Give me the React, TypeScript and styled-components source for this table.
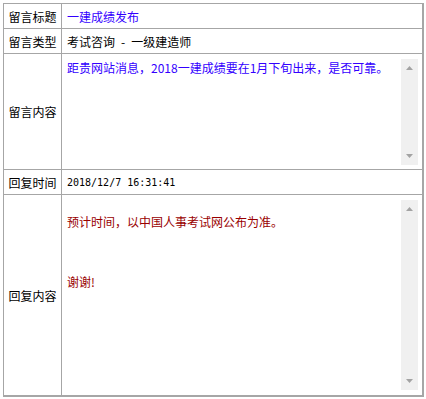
import styled, { createGlobalStyle } from 'styled-components';

const GlobalStyle = createGlobalStyle`
  html, body {
    margin: 0;
    padding: 0;
    background: #fff;
  }
  body {
    font-family: "Noto Sans CJK SC", "Noto Sans", sans-serif;
    font-size: 12px;
    color: #000;
  }
`;

const Page = styled.div`
  padding: 3px;
`;

const Table = styled.div`
  display: grid;
  grid-template-columns: 58px 360px;
  width: 421px;
  box-sizing: border-box;
  border-top: 1px solid #a6a6a6;
  border-left: 1px solid #a6a6a6;
  border-right: 2px solid #a6a6a6;
  border-bottom: 2px solid #a6a6a6;
`;

const Label = styled.div<{ $last?: boolean }>`
  display: flex;
  align-items: center;
  justify-content: center;
  box-sizing: border-box;
  border-right: 1px solid #a6a6a6;
  border-bottom: ${(p) => (p.$last ? 'none' : '1px solid #a6a6a6')};
  line-height: 15px;
  white-space: nowrap;
`;

const Value = styled.div<{ $last?: boolean; $color?: string }>`
  display: flex;
  align-items: center;
  min-height: 25px;
  box-sizing: border-box;
  padding-left: 5px;
  border-bottom: ${(p) => (p.$last ? 'none' : '1px solid #a6a6a6')};
  color: ${(p) => p.$color ?? '#000'};
  line-height: 15px;
  white-space: pre;
`;

const DateText = styled.span`
  font-family: "DejaVu Sans Mono", "Liberation Mono", monospace;
  font-size: 10px;
`;

const AreaCell = styled.div<{ $last?: boolean }>`
  box-sizing: border-box;
  padding: 5px 4px ${(p) => (p.$last ? '5px' : '4px')} 2px;
  border-bottom: ${(p) => (p.$last ? 'none' : '1px solid #a6a6a6')};
`;

const Area = styled.div<{ $height: number }>`
  display: flex;
  height: ${(p) => p.$height}px;
  background: #fff;
`;

const AreaText = styled.div<{ $color: string; $top: number }>`
  flex: 1;
  padding: ${(p) => p.$top}px 0 0 3px;
  color: ${(p) => p.$color};
  line-height: 15px;
  white-space: pre-wrap;
`;

const Scrollbar = styled.div`
  display: flex;
  flex-direction: column;
  justify-content: space-between;
  align-items: center;
  width: 17px;
  padding: 7px 0;
  box-sizing: border-box;
  background: #f0f0f0;
`;

const Arrow = ({ down }: { down?: boolean }) => (
  <svg width="7" height="4" viewBox="0 0 7 4">
    <polygon points={down ? '0,0 7,0 3.5,4' : '3.5,0 7,4 0,4'} fill="#a3a3a3" />
  </svg>
);

const TextBox = ({
  height,
  color,
  top,
  children,
}: {
  height: number;
  color: string;
  top: number;
  children: React.ReactNode;
}) => (
  <Area $height={height}>
    <AreaText $color={color} $top={top}>
      {children}
    </AreaText>
    <Scrollbar>
      <Arrow />
      <Arrow down />
    </Scrollbar>
  </Area>
);

const App = () => {
  return (
    <Page>
      <GlobalStyle />
      <Table>
        <Label>留言标题</Label>
        <Value $color="#3300ff">一建成绩发布</Value>

        <Label>留言类型</Label>
        <Value>{'考试咨询\u2002-\u2002一级建造师'}</Value>

        <Label>留言内容</Label>
        <AreaCell>
          <TextBox height={106} color="#3300ff" top={1}>
            距贵网站消息，2018一建成绩要在1月下旬出来，是否可靠。
          </TextBox>
        </AreaCell>

        <Label>回复时间</Label>
        <Value>
          <DateText>2018/12/7 16:31:41</DateText>
        </Value>

        <Label $last>回复内容</Label>
        <AreaCell $last>
          <TextBox height={190} color="#990000" top={14}>
            {'预计时间，以中国人事考试网公布为准。\n\n\n\n谢谢!'}
          </TextBox>
        </AreaCell>
      </Table>
    </Page>
  );
};

export default App;
